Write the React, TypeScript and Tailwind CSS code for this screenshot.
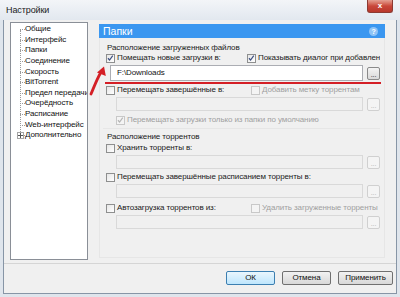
import React from 'react';

const treeItems = [
  'Общие',
  'Интерфейс',
  'Папки',
  'Соединение',
  'Скорость',
  'BitTorrent',
  'Предел передачи',
  'Очерёдность',
  'Расписание',
  'Web-интерфейс',
  'Дополнительно',
];

const CheckBox: React.FC<{ checked?: boolean; disabled?: boolean }> = ({ checked, disabled }) => (
  <span
    className={`relative inline-block w-[9px] h-[9px] shrink-0 border ${
      disabled ? 'border-[#c8c8c8] bg-[#f4f4f4]' : 'border-[#8e8f8f] bg-gradient-to-br from-[#e6e6e6] to-[#ffffff]'
    }`}
  >
    {checked && (
      <svg viewBox="0 0 9 9" className="absolute left-0 top-0 w-[7px] h-[7px]">
        <path
          d="M1.2 4.2 L3.3 6.4 L7.4 0.9"
          fill="none"
          stroke={disabled ? '#b5b5b5' : '#3d4f80'}
          strokeWidth="1.5"
        />
      </svg>
    )}
  </span>
);

const CheckRow: React.FC<{
  label: string;
  checked?: boolean;
  disabled?: boolean;
  className?: string;
}> = ({ label, checked, disabled, className = '' }) => (
  <div className={`flex items-center gap-[2px] h-[10px] whitespace-nowrap ${className}`}>
    <CheckBox checked={checked} disabled={disabled} />
    <span className={disabled ? 'text-[#a0a0a0]' : 'text-[#1a1a1a]'}>{label}</span>
  </div>
);

const BrowseButton: React.FC<{ disabled?: boolean }> = ({ disabled }) => (
  <div
    className={`w-[13px] h-[13px] rounded-[2px] border flex items-end justify-center pb-[1px] text-[7px] leading-none ${
      disabled
        ? 'border-[#d0d0d0] bg-[#f4f4f4] text-[#b0b0b0]'
        : 'border-[#8a8a8a] bg-gradient-to-b from-[#f4f4f4] to-[#d9d9d9] text-[#222]'
    }`}
  >
    ...
  </div>
);

const PathRow: React.FC<{ value?: string; disabled?: boolean; className?: string }> = ({
  value,
  disabled,
  className = '',
}) => (
  <div className={`flex items-center ${className}`}>
    <div
      className={`h-full flex items-center ${
        disabled
          ? 'ml-[13px] w-[249px] border border-[#d9d9d9] bg-[#f0f0f0]'
          : 'ml-[7px] w-[255px] border border-[#abadb3] bg-white'
      }`}
    >
      {value && <span className="pl-[6px] text-[#111]">{value}</span>}
    </div>
    <div className="ml-[4px]">
      <BrowseButton disabled={disabled} />
    </div>
  </div>
);

const Tree: React.FC = () => (
  <div className="relative w-[78px] h-[238px] bg-white border border-[#8a8f97] pt-[1px] overflow-hidden">
    <div className="absolute left-[9px] top-[7px] h-[106px] border-l border-dotted border-[#9a9a9a]" />
    {treeItems.map((item, i) => (
      <div key={item} className="flex items-center h-[10.6px] whitespace-nowrap">
        <div className="relative w-[14px] h-full shrink-0">
          <div className="absolute left-[9px] top-1/2 w-[5px] border-t border-dotted border-[#9a9a9a]" />
          {i === treeItems.length - 1 && (
            <div className="absolute left-[6px] top-[2px] w-[7px] h-[7px] border border-[#a6a6a6] bg-white flex items-center justify-center">
              <div className="relative w-[5px] h-[5px]">
                <div className="absolute left-0 top-[2px] w-[5px] h-[1px] bg-[#555]" />
                <div className="absolute left-[2px] top-0 w-[1px] h-[5px] bg-[#555]" />
              </div>
            </div>
          )}
        </div>
        <span className="text-[#111]">{item}</span>
      </div>
    ))}
  </div>
);

const RedArrow: React.FC = () => (
  <svg className="absolute left-[86px] top-[62px] w-[26px] h-[36px]" viewBox="0 0 26 36">
    <path d="M5 32 C8 25 11 17 14.5 11" fill="none" stroke="#d41f26" strokeWidth="2.8" strokeLinecap="round" />
    <path d="M18 4.5 L19.8 14 L11 10.5 Z" fill="#d41f26" />
  </svg>
);

export default function App() {
  return (
    <div className="relative w-[400px] h-[297px] flex flex-col bg-[#dfe5ec] px-[3px] pb-[3px] font-['Liberation_Sans',Arial,sans-serif] text-[8px] tracking-[-0.1px] leading-[10px] overflow-hidden">
      {/* title bar */}
      <div className="relative h-[20px] flex items-start bg-gradient-to-b from-[#f3f5f8] to-[#e2e8ef] -mx-[3px] px-[6px]">
        <span className="mt-[5px] text-[9px] text-[#1b1b1b]">Настройки</span>
        <div className="absolute right-[7px] top-0 w-[26px] h-[13px] rounded-b-[3px] border border-t-0 border-[#8c3a32] bg-gradient-to-b from-[#e3a093] via-[#c9473a] to-[#b8382c] flex items-center justify-center">
          <span className="text-white text-[8px] font-bold leading-none">x</span>
        </div>
      </div>

      {/* client area */}
      <div className="flex-1 flex flex-col bg-[#f0f0f0] border-x border-b border-[#8795a6]">
        <div className="h-[244px] flex pl-[6px] pt-[2px] border-b border-[#d5d5d5]">
          <Tree />

          <div className="ml-[11px] mt-[2px] w-[286px] h-[234px] flex flex-col border border-[#e6e6e6]">
            <div className="h-[14px] -mx-px -mt-px flex items-center justify-between bg-[#3b97f0] px-[4px]">
              <span className="text-white text-[10.5px] tracking-normal leading-none">Папки</span>
              <div className="w-[9px] h-[9px] rounded-full bg-[#8ec4f7] flex items-center justify-center mr-[3px]">
                <span className="text-white text-[7px] font-bold leading-none">?</span>
              </div>
            </div>

            <div className="pl-[3px] pr-[4px]">
              {/* download locations */}
              <div className="mt-[5px] h-[10px] pl-[4px] whitespace-nowrap text-[#1a1a1a]">
                Расположение загруженных файлов
              </div>
              <div className="flex h-[10px] items-center overflow-hidden">
                <CheckRow label="Помещать новые загрузки в:" checked className="pl-[3px] w-[148px]" />
                <CheckRow label="Показывать диалог при добавлении в[" checked className="w-[133px]" />
              </div>
              <PathRow value="F:\Downloads" className="mt-[2px] h-[16px]" />
              <div className="mt-[1px] ml-[2px] h-[2px] w-[276px] bg-[#d41f26]" />
              <div className="mt-[1px] flex h-[10px] items-center">
                <CheckRow label="Перемещать завершённые в:" className="pl-[3px] w-[148px]" />
                <CheckRow label="Добавить метку торрентам" disabled />
              </div>
              <PathRow disabled className="mt-[2px] h-[14px]" />
              <CheckRow
                label="Перемещать загрузки только из папки по умолчанию"
                checked
                disabled
                className="mt-[4px] pl-[13px]"
              />
              <div className="mt-[3px] h-px w-full bg-[#e6e6e6]" />

              {/* torrent locations */}
              <div className="mt-[3px] h-[10px] pl-[4px] whitespace-nowrap text-[#1a1a1a]">
                Расположение торрентов
              </div>
              <CheckRow label="Хранить торренты в:" className="mt-[1px] pl-[3px]" />
              <PathRow disabled className="mt-[2px] h-[14px]" />
              <CheckRow label="Перемещать завершённые расписанием торренты в:" className="mt-[3px] pl-[3px]" />
              <PathRow disabled className="mt-[2px] h-[14px]" />
              <div className="mt-[5px] flex h-[10px] items-center">
                <CheckRow label="Автозагрузка торрентов из:" className="pl-[3px] w-[148px]" />
                <CheckRow label="Удалить загруженные торренты" disabled />
              </div>
              <PathRow disabled className="mt-[2px] h-[14px]" />
            </div>
          </div>
        </div>

        {/* buttons */}
        <div className="flex justify-end gap-[7px] pt-[7px] pr-[3px]">
          <button className="w-[49px] h-[14px] rounded-[2px] border border-[#3c7fb1] bg-gradient-to-b from-[#eaf6fd] to-[#bee6fd] text-[8px] leading-none text-[#111]">
            ОК
          </button>
          <button className="w-[49px] h-[14px] rounded-[2px] border border-[#707070] bg-gradient-to-b from-[#f2f2f2] to-[#d8d8d8] text-[8px] leading-none text-[#111]">
            Отмена
          </button>
          <button className="w-[55px] h-[14px] rounded-[2px] border border-[#707070] bg-gradient-to-b from-[#f2f2f2] to-[#d8d8d8] text-[8px] leading-none text-[#111]">
            Применить
          </button>
        </div>
      </div>

      <RedArrow />
    </div>
  );
}
